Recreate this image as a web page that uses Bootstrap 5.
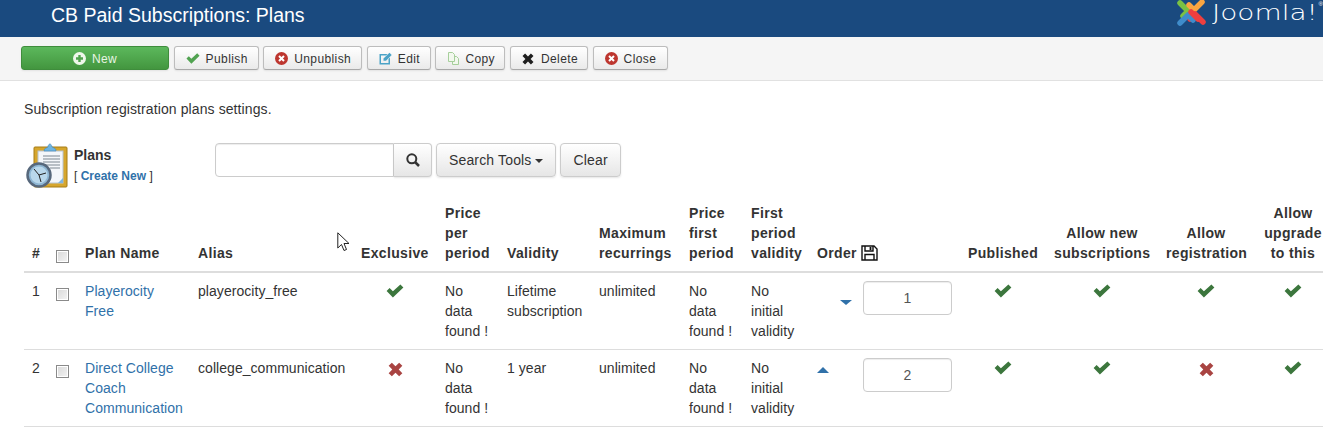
<!DOCTYPE html>
<html lang="en">
<head>
<meta charset="utf-8">
<title>CB Paid Subscriptions: Plans</title>
<link rel="stylesheet" href="https://cdn.jsdelivr.net/npm/bootstrap@5.3.0/dist/css/bootstrap.min.css">
<style>
html,body{height:435px;overflow:hidden}
body{font-family:"Liberation Sans",Arial,sans-serif;font-size:14px;line-height:20px;color:#333;background:#fff;position:relative;width:1323px}
.topbar{height:37px;background:#1a4a7f;color:#fff}
.topbar h1{font-size:19.5px;line-height:30px;font-weight:400;margin:0 0 0 51px;color:#fff}
.jlogo{height:37px}
.jword{font-family:"DejaVu Sans","Liberation Sans",sans-serif;font-weight:200;font-size:22px;line-height:26px;color:#fff;margin:0 23px 0 4px;transform:scaleX(1.27);transform-origin:left center}
.jreg{font-size:6px;line-height:8px;color:#fff}
.toolrow{height:44px;background:#f5f5f5;border-bottom:1px solid #e1e1e1;padding:9px 21px 0;gap:4.6px}
.tbtn{height:24px;padding:1px 0 0 11px;font-size:12px;line-height:22px;color:#333;letter-spacing:.4px;background:linear-gradient(#fff,#eaeaea);border:1px solid #bdbdbd;border-bottom-color:#a8a8a8;border-radius:3px;box-shadow:0 1px 2px rgba(0,0,0,.08);gap:6px;white-space:nowrap}
.tbtn:hover{color:#333}
.tbtn-new{width:148px;padding-left:0;color:#e8f5e4;background:linear-gradient(#5cb85c,#43963f);border-color:#3f8d3c}
.tbtn-new:hover{color:#e8f5e4}
.tb-pub{width:85px}.tb-unpub{width:99px}.tb-edit{width:64px}.tb-copy{width:70px;gap:5px}.tb-del{width:78px;gap:7px}.tb-close{width:75px}
.descr{margin:0;padding:18px 0 0 24px;line-height:20px;letter-spacing:.1px}
.filterrow{margin-top:24px;padding-left:26px;height:52px}
.planicon{width:44px;height:46px;flex:none;margin-top:-1px}
.plantext{font-size:12px;line-height:21px;margin:2px 0 0 4px;width:141px}
.plantext b{display:block;font-size:14px}
.plantext a,.plan-link{color:#3071a9;text-decoration:none}
.plantext a{font-weight:700}
.sgroup{height:34px;width:217px}
.sgroup .sinput{width:179px;height:34px;border:1px solid #ccc;border-radius:4px 0 0 4px;box-shadow:inset 0 1px 1px rgba(0,0,0,.075);background:#fff}
.sbtn{height:34px;padding:0 12px;font-size:14px;line-height:32px;letter-spacing:.15px;color:#333;background:linear-gradient(#fff,#e6e6e6);border:1px solid #ccc;border-radius:4px;box-shadow:0 1px 2px rgba(0,0,0,.1)}
.sgroup .sbtn{width:38px;border-radius:0 4px 4px 0;border-left:0;padding:0 0 0 12px}
.caretdn{display:inline-block;border-top:4px solid #333;border-left:4px solid transparent;border-right:4px solid transparent;margin-left:4px;vertical-align:2px}
.plantable{table-layout:fixed;width:1308px;margin:0 0 0 24px;border-collapse:collapse;color:#333}
.plantable th,.plantable td{padding:8px;font-size:14px;line-height:20px;color:#333;background:transparent;vertical-align:top}
.plantable td{letter-spacing:.05px}
.plantable thead th{vertical-align:bottom;font-weight:700;border-bottom:2px solid #ddd;letter-spacing:.35px}
.plantable tbody td{border-bottom:1px solid #ddd}
.plantable .w1{width:24px}.plantable .w2{width:29px}.plantable .w3{width:113px}.plantable .w4{width:163px}.plantable .w5{width:84px}.plantable .w6{width:62px}.plantable .w7{width:92px}.plantable .w8{width:90px}.plantable .w9{width:62px}.plantable .w10{width:66px}.plantable .w11{width:151px}.plantable .w12{width:86px}.plantable .w13{width:112px}.plantable .w14{width:96px}.plantable .w15{width:78px}
.cb{appearance:none;display:block;width:13px;height:13px;margin:7px 0 0;border:1px solid #8a8a8a;background:linear-gradient(135deg,#d8d8d8,#f4f4f4);box-shadow:inset 0 0 0 1px #fff}
thead .cb{margin:4px 0 0}
.slot{width:23px;flex:none;height:34px}
.ordinput{width:89px;height:34px;border:1px solid #ccc;border-radius:4px;text-align:center;font-size:14px;color:#555;line-height:32px;background:#fff;box-shadow:inset 0 1px 1px rgba(0,0,0,.075)}
.ticon{display:block;margin:3px auto 0}
.xicon{margin-top:4px}
.tridown{width:0;height:0;border-top:5px solid #3071a9;border-left:6px solid transparent;border-right:6px solid transparent;margin-top:19px}
.triup{width:0;height:0;border-bottom:6px solid #3071a9;border-left:6px solid transparent;border-right:6px solid transparent;margin-top:9px}
.pointer{position:absolute;left:337px;top:232px;width:13px;height:20px}
</style>
</head>
<body>
<svg width="0" height="0" class="d-block position-absolute">
  <defs>
    <symbol id="i-check" viewBox="0 0 18 14"><path d="M.6 7 3.600 4 6.900 7.200 14.400.4 17.400 3.400 6.900 13.600Z"/></symbol>
    <symbol id="i-x" viewBox="0 0 14 14"><path d="M.6 3.600 3.600.6 7 4 10.400.6 13.400 3.600 10 7 13.400 10.400 10.400 13.400 7 10 3.600 13.400.6 10.400 4 7Z"/></symbol>
  </defs>
</svg>

<header class="topbar d-flex justify-content-between align-items-start overflow-hidden">
  <h1>CB Paid Subscriptions: Plans</h1>
  <div class="jlogo d-flex align-items-start">
    <svg width="32" height="27" viewBox="0 0 32 27" fill="none" stroke-width="5.500" stroke-linecap="round" stroke-linejoin="round">
      <path d="M4 3 12 11 7 16" stroke="#7ac143"/>
      <path d="M26 2 18 10 13 5" stroke="#f9a541"/>
      <path d="M27 22 19 14 14 19" stroke="#ee3f3f"/>
      <path d="M4 23 12 15 17 20" stroke="#3f8ccb"/>
      <path d="M15 12 22 19" stroke="#ee3f3f"/>
    </svg>
    <span class="jword">Joomla!</span><span class="jreg">®</span>
  </div>
</header>

<div class="toolrow d-flex">
  <a href="#" class="btn tbtn tbtn-new d-inline-flex align-items-center justify-content-center">
    <svg width="13" height="13" viewBox="0 0 13 13"><circle cx="6.5" cy="6.5" r="6.5" fill="#eef7ea"/><path d="M5.300 3h2.400v2.300H10v2.400H7.700V10H5.300V7.700H3V5.300h2.300Z" fill="#4fa34c"/></svg>New</a>
  <a href="#" class="btn tbtn tb-pub d-inline-flex align-items-center">
    <svg width="14" height="11" fill="#51a351"><use href="#i-check"/></svg>Publish</a>
  <a href="#" class="btn tbtn tb-unpub d-inline-flex align-items-center">
    <svg width="13" height="13" viewBox="0 0 13 13"><circle cx="6.5" cy="6.5" r="6.5" fill="#bd362f"/><path d="M3.300 4.700 4.700 3.300 6.500 5.100 8.300 3.300 9.700 4.700 7.900 6.500 9.700 8.300 8.300 9.700 6.500 7.900 4.700 9.700 3.300 8.300 5.100 6.500Z" fill="#fff"/></svg>Unpublish</a>
  <a href="#" class="btn tbtn tb-edit d-inline-flex align-items-center">
    <svg width="13" height="13" viewBox="0 0 13 13"><path d="M.5 2h8L7 3.500H2v7.500h7.500V7L11 5.500V12.500H.5Z" fill="#4ba3c7"/><path d="M4.500 6.500 10.500.8 12.700 3 7 8.800H4.500Z" fill="#4ba3c7"/></svg>Edit</a>
  <a href="#" class="btn tbtn tb-copy d-inline-flex align-items-center">
    <svg width="13" height="13" viewBox="0 0 13 13" fill="#f2f8ee" stroke="#a6cf9b"><path d="M7.500 4.500h2l2 2v6h-6v-3"/><path d="M1.500.5h4l2 2v7h-6Z"/></svg>Copy</a>
  <a href="#" class="btn tbtn tb-del d-inline-flex align-items-center">
    <svg width="12" height="12" fill="#1f1f1f"><use href="#i-x"/></svg>Delete</a>
  <a href="#" class="btn tbtn tb-close d-inline-flex align-items-center">
    <svg width="13" height="13" viewBox="0 0 13 13"><circle cx="6.5" cy="6.5" r="6.5" fill="#bd362f"/><path d="M3.300 4.700 4.700 3.300 6.500 5.100 8.300 3.300 9.700 4.700 7.900 6.500 9.700 8.300 8.300 9.700 6.500 7.900 4.700 9.700 3.300 8.300 5.100 6.500Z" fill="#fff"/></svg>Close</a>
</div>

<p class="descr">Subscription registration plans settings.</p>

<div class="filterrow d-flex align-items-start">
  <svg class="planicon" viewBox="0 0 44 46">
    <rect x="8" y="5" width="33" height="40" rx="1" fill="#d6a62d" stroke="#a67c17"/>
    <rect x="12" y="9" width="25" height="32" fill="#f4f7fb" stroke="#b8c4d2"/>
    <path d="M18 9c0-3 3-3 4-4 0-3 3-5 4 0 2 1 4 1 4 4Z" fill="#6fb4e0" stroke="#3d86bd" stroke-width=".6"/>
    <path d="M17 14h17M17 17h17M17 20h17M17 23h17M24 26h10" stroke="#7d8791"/>
    <path d="M37 36 32 41h5Z" fill="#7fb5de"/>
    <circle cx="13" cy="33" r="11.500" fill="#8eb6d3" stroke="#57687c" stroke-width="2.500"/>
    <circle cx="13" cy="33" r="8.500" fill="#b9d8ec"/>
    <path d="M13 33 8 27M13 33 20 31M13 33 15 40" stroke="#222" fill="none"/>
  </svg>
  <div class="plantext">
    <b>Plans</b>
    <span>[ <a href="#">Create New</a> ]</span>
  </div>
  <div class="sgroup d-flex">
    <input class="sinput" type="text" aria-label="Search">
    <button class="sbtn" type="button" aria-label="Search">
      <svg width="14" height="14" viewBox="0 0 14 14" class="d-block" fill="none" stroke="#333" stroke-width="2"><circle cx="5.800" cy="5.800" r="4.500"/><path d="M9 9 13 13" stroke-width="2.500"/></svg>
    </button>
  </div>
  <button class="sbtn ms-1" type="button">Search Tools<span class="caretdn"></span></button>
  <button class="sbtn ms-1" type="button">Clear</button>
</div>

<table class="table plantable">
  <thead>
    <tr>
      <th class="w1">#</th>
      <th class="w2"><input class="cb" type="checkbox" aria-label="Select all"></th>
      <th class="w3">Plan Name</th>
      <th class="w4">Alias</th>
      <th class="w5">Exclusive</th>
      <th class="w6">Price per period</th>
      <th class="w7">Validity</th>
      <th class="w8">Maximum recurrings</th>
      <th class="w9">Price first period</th>
      <th class="w10">First period validity</th>
      <th class="w11 text-nowrap">Order
        <svg width="17" height="16" viewBox="0 0 17 16" class="align-text-bottom" fill="none" stroke="#111" stroke-width="1.400"><path d="M1 1h12l3 3v11H1Z"/><path d="M4 1v5h8V1M4 15V9.500h9V15"/><path d="M9.500 2v3" stroke-width="1.800"/></svg>
      </th>
      <th class="w12 text-center">Published</th>
      <th class="w13 text-center">Allow new subscriptions</th>
      <th class="w14 text-center">Allow registration</th>
      <th class="w15 text-center">Allow upgrade to this</th>
    </tr>
  </thead>
  <tbody>
    <tr>
      <td>1</td>
      <td><input class="cb" type="checkbox" aria-label="Select plan 1"></td>
      <td><a class="plan-link" href="#">Playerocity Free</a></td>
      <td>playerocity_free</td>
      <td><svg class="ticon" width="18" height="14" fill="#3c763d"><use href="#i-check"/></svg></td>
      <td>No data found !</td>
      <td>Lifetime subscription</td>
      <td>unlimited</td>
      <td>No data found !</td>
      <td>No initial validity</td>
      <td><div class="d-flex"><span class="slot"></span><span class="slot"><span class="tridown d-block"></span></span><input class="ordinput" type="text" value="1" aria-label="Order"></div></td>
      <td><svg class="ticon" width="18" height="14" fill="#3c763d"><use href="#i-check"/></svg></td>
      <td><svg class="ticon" width="18" height="14" fill="#3c763d"><use href="#i-check"/></svg></td>
      <td><svg class="ticon" width="18" height="14" fill="#3c763d"><use href="#i-check"/></svg></td>
      <td><svg class="ticon" width="18" height="14" fill="#3c763d"><use href="#i-check"/></svg></td>
    </tr>
    <tr>
      <td>2</td>
      <td><input class="cb" type="checkbox" aria-label="Select plan 2"></td>
      <td><a class="plan-link" href="#">Direct College Coach Communication</a></td>
      <td>college_communication</td>
      <td><svg class="ticon xicon" width="15" height="15" fill="#a94442"><use href="#i-x"/></svg></td>
      <td>No data found !</td>
      <td>1 year</td>
      <td>unlimited</td>
      <td>No data found !</td>
      <td>No initial validity</td>
      <td><div class="d-flex"><span class="slot"><span class="triup d-block"></span></span><span class="slot"></span><input class="ordinput" type="text" value="2" aria-label="Order"></div></td>
      <td><svg class="ticon" width="18" height="14" fill="#3c763d"><use href="#i-check"/></svg></td>
      <td><svg class="ticon" width="18" height="14" fill="#3c763d"><use href="#i-check"/></svg></td>
      <td><svg class="ticon xicon" width="15" height="15" fill="#a94442"><use href="#i-x"/></svg></td>
      <td><svg class="ticon" width="18" height="14" fill="#3c763d"><use href="#i-check"/></svg></td>
    </tr>
  </tbody>
</table>

<svg class="pointer" viewBox="0 0 13 20"><path d="M.8.8V16L4.500 12.500 7 18.500 9.500 17.500 7 11.500H12Z" fill="#fff" stroke="#222"/></svg>

<script src="https://cdn.jsdelivr.net/npm/bootstrap@5.3.0/dist/js/bootstrap.bundle.min.js"></script>
</body>
</html>
